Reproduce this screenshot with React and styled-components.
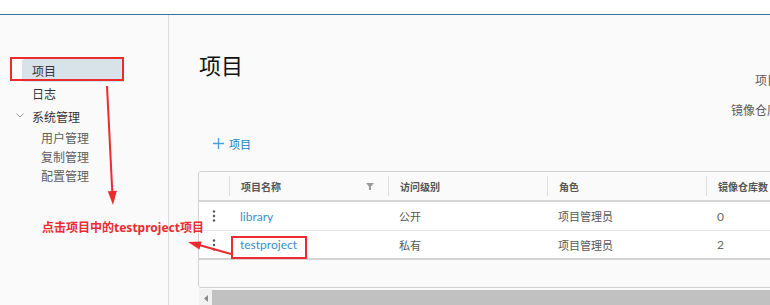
import React from "react";
import styled, { createGlobalStyle } from "styled-components";

const GlobalStyle = createGlobalStyle`
  html, body { margin: 0; padding: 0; background: #fafafa; overflow: hidden; }
  body { font-family: "Noto Sans CJK SC", "Noto Sans", sans-serif; }
  * { box-sizing: border-box; }
`;

const Page = styled.div`
  position: relative;
  width: 770px;
  height: 305px;
  overflow: hidden;
  display: flex;
  flex-direction: column;
  background: #fafafa;
`;

const TopBar = styled.div`
  height: 15px;
  flex: none;
  background: #ffffff;
  border-bottom: 1px solid #31759c;
`;

const Body = styled.div`
  flex: 1;
  display: flex;
  min-height: 0;
`;

const Sidebar = styled.nav`
  width: 169px;
  flex: none;
  border-right: 1px solid #dcdcdc;
  padding-top: 44px;
  display: flex;
  flex-direction: column;
`;

const NavItem = styled.div`
  height: ${(p) => (p.$sub ? 19 : 23)}px;
  flex: none;
  display: flex;
  align-items: center;
  margin-left: ${(p) => (p.$sub ? 41 : 22)}px;
  padding-left: ${(p) => (p.$sub ? 0 : 10)}px;
  width: ${(p) => (p.$sub ? "auto" : "102px")};
  font-size: 12px;
  color: ${(p) => (p.$sub ? "#5e5e5e" : "#333")};
  background: ${(p) => (p.$active ? "#d8e3e9" : "transparent")};
  border-radius: ${(p) => (p.$active ? "3px 0 0 3px" : "0")};
  position: relative;
`;

const Chevron = styled.svg`
  position: absolute;
  left: -6px;
  top: 8px;
`;

const Main = styled.main`
  flex: 1;
  min-width: 0;
  padding: 34px 0 0 29px;
  display: flex;
  flex-direction: column;
  align-items: flex-start;
`;

const HeaderRow = styled.div`
  width: 581px;
  flex: none;
  display: flex;
  justify-content: space-between;
  align-items: flex-start;
`;

const Heading = styled.h1`
  margin: 0 0 0 1px;
  font-size: 22px;
  font-weight: 400;
  line-height: 30px;
  color: #111;
`;

const Stats = styled.div`
  margin-top: 21px;
  display: flex;
  flex-direction: column;
  align-items: flex-end;
  gap: 10px;
`;

const StatLabel = styled.div`
  font-size: 12px;
  line-height: 20px;
  color: #5a5a5a;
  white-space: nowrap;
`;

const AddButton = styled.button`
  margin-top: 12px;
  height: 24px;
  padding: 0 0 0 15px;
  border: none;
  background: transparent;
  display: flex;
  align-items: center;
  gap: 5px;
  font-family: "Noto Sans CJK SC", sans-serif;
  font-size: 11px;
  color: #0f7fbf;
  cursor: pointer;
`;

const Table = styled.div`
  margin-top: 16px;
  width: 640px;
  flex: none;
  border: 1px solid #d0d0d0;
  border-radius: 3px;
  overflow: hidden;
`;

const cols = "30px 159px 159px 159px 1fr";

const HeadRow = styled.div`
  display: grid;
  grid-template-columns: ${cols};
  align-items: center;
  height: 30px;
  border-bottom: 2px solid #d4d4d4;
  background: #fafafa;
`;

const HeadCell = styled.div`
  height: 20px;
  display: flex;
  align-items: center;
  justify-content: space-between;
  padding: 0 14px 0 11px;
  border-left: ${(p) => (p.$first ? "none" : "1px solid #dedede")};
  font-size: 10px;
  font-weight: 700;
  color: #555;
  white-space: nowrap;
`;

const Row = styled.div`
  display: grid;
  grid-template-columns: ${cols};
  align-items: center;
  height: 29px;
  background: #fff;
  border-bottom: ${(p) => (p.$last ? "2px solid #d4d4d4" : "1px solid #e6e6e6")};
`;

const Cell = styled.div`
  padding-left: ${(p) => (p.$action ? 0 : 11)}px;
  display: flex;
  align-items: center;
  justify-content: ${(p) => (p.$action ? "center" : "flex-start")};
  font-size: 11px;
  color: #565656;
  white-space: nowrap;
`;

const NumCell = styled(Cell)`
  font-family: "Lato", sans-serif;
  font-size: 12px;
  color: #666;
`;

const Link = styled.a`
  font-family: "Lato", "Noto Sans CJK SC", sans-serif;
  font-size: 12px;
  color: #3a8fc9;
  text-decoration: none;
`;

const Footer = styled.div`
  height: 27px;
  background: #fafafa;
`;

const Scrollbar = styled.div`
  margin-top: 1px;
  margin-left: 1px;
  width: 640px;
  height: 16px;
  flex: none;
  display: flex;
`;

const ScrollArrow = styled.div`
  width: 13px;
  background: #f1f1f1;
  display: flex;
  align-items: center;
  justify-content: center;
  padding-top: 2px;
`;

const ScrollThumb = styled.div`
  flex: 1;
  margin-top: 1px;
  background: #c1c1c1;
`;

const Overlay = styled.svg`
  position: absolute;
  left: 0;
  top: 0;
  pointer-events: none;
`;

const Note = styled.div`
  position: absolute;
  left: 42px;
  top: 219px;
  font-family: "Noto Sans", "Noto Sans CJK SC", sans-serif;
  font-size: 12px;
  font-weight: 700;
  line-height: 18px;
  color: #ec2a2f;
  white-space: nowrap;
`;

const Dots = () => (
  <svg width="4" height="12" viewBox="0 0 4 12">
    <circle cx="2" cy="1.5" r="1.2" fill="#555" />
    <circle cx="2" cy="6" r="1.2" fill="#555" />
    <circle cx="2" cy="10.5" r="1.2" fill="#555" />
  </svg>
);

const Funnel = () => (
  <svg width="8" height="7" viewBox="0 0 8 7">
    <path d="M0 0 H8 L5 3.5 V7 H3 V3.5 Z" fill="#9a9a9a" />
  </svg>
);

const rows = [
  { name: "library", access: "公开", role: "项目管理员", count: "0" },
  { name: "testproject", access: "私有", role: "项目管理员", count: "2" },
];

export default function App() {
  return (
    <>
      <GlobalStyle />
      <Page>
        <TopBar />
        <Body>
          <Sidebar>
            <NavItem $active>项目</NavItem>
            <NavItem>日志</NavItem>
            <NavItem>
              <Chevron width="8" height="5" viewBox="0 0 8 5">
                <path d="M0.5 0.5 L4 4 L7.5 0.5" fill="none" stroke="#9a9a9a" strokeWidth="1" />
              </Chevron>
              系统管理
            </NavItem>
            <NavItem $sub>用户管理</NavItem>
            <NavItem $sub>复制管理</NavItem>
            <NavItem $sub>配置管理</NavItem>
          </Sidebar>
          <Main>
            <HeaderRow>
              <Heading>项目</Heading>
              <Stats>
                <StatLabel>项目</StatLabel>
                <StatLabel>镜像仓库</StatLabel>
              </Stats>
            </HeaderRow>
            <AddButton>
              <svg width="11" height="11" viewBox="0 0 11 11">
                <path d="M5.5 0 V11 M0 5.5 H11" stroke="#4aa0d6" strokeWidth="1.3" />
              </svg>
              项目
            </AddButton>
            <Table>
              <HeadRow>
                <HeadCell $first />
                <HeadCell>
                  项目名称
                  <Funnel />
                </HeadCell>
                <HeadCell>访问级别</HeadCell>
                <HeadCell>角色</HeadCell>
                <HeadCell>镜像仓库数</HeadCell>
              </HeadRow>
              {rows.map((r, i) => (
                <Row key={r.name} $last={i === rows.length - 1}>
                  <Cell $action>
                    <Dots />
                  </Cell>
                  <Cell>
                    <Link href="#">{r.name}</Link>
                  </Cell>
                  <Cell>{r.access}</Cell>
                  <Cell>{r.role}</Cell>
                  <NumCell>{r.count}</NumCell>
                </Row>
              ))}
              <Footer />
            </Table>
            <Scrollbar>
              <ScrollArrow>
                <svg width="4" height="7" viewBox="0 0 4 7">
                  <path d="M4 0 V7 L0 3.5 Z" fill="#8a8a8a" />
                </svg>
              </ScrollArrow>
              <ScrollThumb />
            </Scrollbar>
          </Main>
        </Body>
        <Overlay width="770" height="305" viewBox="0 0 770 305">
          <rect x="11" y="58" width="112" height="22" fill="none" stroke="#ec2a2f" strokeWidth="2" />
          <rect x="232" y="237" width="74" height="21" fill="none" stroke="#ec2a2f" strokeWidth="2" />
          <line x1="107" y1="86" x2="112.3" y2="192" stroke="#ec2a2f" strokeWidth="2" />
          <polygon points="113,205 116.8,190.8 107.8,191.2" fill="#ec2a2f" />
          <line x1="231" y1="254" x2="200" y2="245.3" stroke="#ec2a2f" strokeWidth="2" />
          <polygon points="188,242 201.6,241.4 199.4,249.5" fill="#ec2a2f" />
        </Overlay>
        <Note>点击项目中的testproject项目</Note>
      </Page>
    </>
  );
}
